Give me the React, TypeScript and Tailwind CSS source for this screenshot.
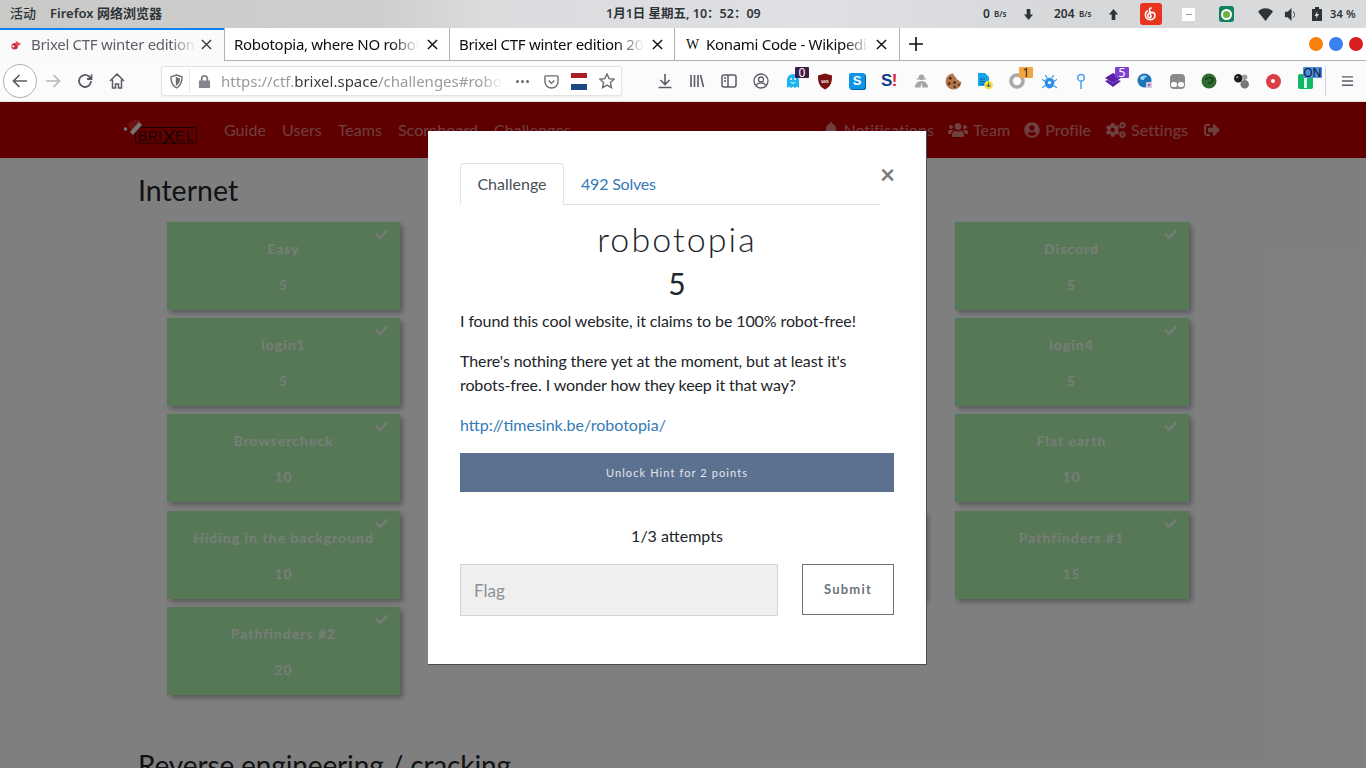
import { FaBell, FaCheck, FaCogs, FaSignOutAlt, FaUserCircle, FaUsers } from "react-icons/fa";
import { ReactNode } from "react";

const UI_FONT = "font-['Noto_Sans','Noto_Sans_CJK_SC',sans-serif]";
const PAGE_FONT = "font-['Lato',sans-serif]";

function TopBar() {
  return (
    <div className={`flex h-[28px] items-center bg-[linear-gradient(90deg,#c9c9c8_0%,#cfcfce_28%,#dcdcdf_36%,#dfe0e3_60%,#d6d7d9_80%,#dadbdd_100%)] text-[#2e3436] ${UI_FONT}`}>
      <span className="ml-[10px] w-[40px] text-[13px] font-medium">活动</span>
      <span className="w-[556px] text-[13px] font-semibold">Firefox 网络浏览器</span>
      <span className="w-[377px] text-[12.500px] font-semibold">1月1日 星期五, 10：52：09</span>
      <span className="w-[11px] text-[12px] font-semibold">0</span>
      <span className="w-[29px] text-[8px] font-semibold">B/s</span>
      <svg viewBox="0 0 12 14" className="mr-[20px] h-[13px] w-[11px] fill-[#2e3436]"><path d="M4 1h4v6h3l-5 6-5-6h3z" /></svg>
      <span className="w-[25px] text-[12px] font-semibold">204</span>
      <span className="w-[29px] text-[8px] font-semibold">B/s</span>
      <svg viewBox="0 0 12 14" className="mr-[21px] h-[13px] w-[11px] fill-[#2e3436]"><path d="M4 13h4V7h3L6 1 1 7h3z" /></svg>
      <div className="mr-[20px] flex h-[22px] w-[22px] items-center justify-center rounded-[3px] bg-[#e8331f]">
        <svg viewBox="0 0 20 20" className="h-[16px] w-[16px] fill-none stroke-white stroke-[2]"><path d="M11 3c-1-1-3 0-3 2l2 8c0 2-4 2-4-1 0-2 2-4 5-4s4 2 4 4c0 3-3 5-6 5-4 0-6-3-6-6 0-2 1-4 3-5" /></svg>
      </div>
      <div className="mr-[24px] flex h-[13px] w-[13px] items-center justify-center bg-white"><div className="h-[1px] w-[6px] bg-[#999]" /></div>
      <div className="mr-[24px] flex h-[16px] w-[15px] items-center justify-center rounded-[3px] bg-[#13805f]">
        <div className="flex h-[11px] w-[11px] items-center justify-center rounded-full bg-white"><div className="h-[7px] w-[7px] rounded-full bg-[#6cb33f]" /></div>
      </div>
      <svg viewBox="0 0 16 14" className="mr-[11px] h-[13px] w-[15px] fill-[#2e3436]"><path d="M0 4c4-5 12-5 16 0l-8 10z" /></svg>
      <svg viewBox="0 0 16 16" className="mr-[13px] h-[15px] w-[15px] fill-[#2e3436]"><path d="M1 5h3l4-4v14l-4-4H1zM10 4c2 2 2 6 0 8v-2c1-1 1-3 0-4z" /></svg>
      <svg viewBox="0 0 10 14" className="mr-[8px] h-[14px] w-[10px] fill-[#2e3436]"><path d="M3 0h4v2h3v12H0V2h3zM5.500 4 2.500 9h2l-.5 3 3-5H5z" /></svg>
      <span className="text-[11px] font-semibold tracking-[0.2px]">34 %</span>
    </div>
  );
}

function CloseX({ color }: { color: string }) {
  return (
    <svg viewBox="0 0 12 12" className={`h-[11px] w-[11px] shrink-0 fill-none stroke-[1.500] ${color}`}>
      <path d="M1 1l10 10M11 1 1 11" />
    </svg>
  );
}

function FadedTitle({ text, width }: { text: string; width: string }) {
  return (
    <span className={`overflow-hidden text-[15px] tracking-[-0.3px] whitespace-nowrap [mask-image:linear-gradient(90deg,#000_85%,transparent_100%)] ${width}`}>{text}</span>
  );
}

function TabStrip() {
  return (
    <div className={`flex h-[33px] bg-white ${UI_FONT}`}>
      <div className="relative flex h-full w-[225px] items-center border-r border-r-[#b1b1b3] bg-[#fafafb] text-[#5c5f66]">
        <div className="absolute top-0 right-0 left-0 h-[2px] bg-[#0a84ff]" />
        <div className="flex w-[31px] shrink-0 justify-center pl-[2px]">
          <svg viewBox="0 0 14 14" className="h-[13px] w-[13px]"><circle cx="5" cy="9" r="3.500" fill="#c9313f" /><path d="M6 3l6 3.500-5 3z" fill="#e4495a" /><circle cx="3.500" cy="9" r="1.200" fill="#eee" /></svg>
        </div>
        <FadedTitle text="Brixel CTF winter edition" width="w-[165px]" />
        <span className="ml-[5px]"><CloseX color="stroke-[#3a3a3c]" /></span>
      </div>
      <div className="flex h-full w-[225px] items-center border-r border-b border-r-[#b1b1b3] border-b-[#b1b1b3] pl-[9px] text-[#0c0c0d]">
        <FadedTitle text="Robotopia, where NO robot" width="w-[185px]" />
        <span className="ml-[8px]"><CloseX color="stroke-[#0c0c0d]" /></span>
      </div>
      <div className="flex h-full w-[225px] items-center border-r border-b border-r-[#b1b1b3] border-b-[#b1b1b3] pl-[9px] text-[#0c0c0d]">
        <FadedTitle text="Brixel CTF winter edition 20" width="w-[185px]" />
        <span className="ml-[8px]"><CloseX color="stroke-[#0c0c0d]" /></span>
      </div>
      <div className="flex h-full w-[225px] items-center border-r border-b border-r-[#b1b1b3] border-b-[#b1b1b3] pl-[11px] text-[#0c0c0d]">
        <span className="w-[20px] font-['Liberation_Serif',serif] text-[14px]">W</span>
        <FadedTitle text="Konami Code - Wikipedia" width="w-[163px]" />
        <span className="ml-[7px]"><CloseX color="stroke-[#0c0c0d]" /></span>
      </div>
      <div className="flex flex-1 items-center border-b border-b-[#b1b1b3] pr-[3px]">
        <svg viewBox="0 0 14 14" className="ml-[9px] h-[14px] w-[14px] fill-none stroke-[#0c0c0d] stroke-[1.600]"><path d="M7 0v14M0 7h14" /></svg>
        <div className="ml-auto flex gap-[6px]">
          <div className="h-[14px] w-[14px] rounded-full bg-[#fb7f0c]" />
          <div className="h-[14px] w-[14px] rounded-full bg-[#3b82f0]" />
          <div className="h-[14px] w-[14px] rounded-full bg-[#d81e1e]" />
        </div>
      </div>
    </div>
  );
}

function Badge({ text, color, dark }: { text: string; color: string; dark?: boolean }) {
  return (
    <span className={`absolute top-[6px] right-0 flex h-[11px] w-[14px] items-center justify-center rounded-[1px] text-[12px] leading-none ${color} ${dark ? "text-[#222]" : "text-white"}`}>{text}</span>
  );
}

function ExtIcon({ children }: { children: ReactNode }) {
  return <div className="relative flex h-full w-[32px] shrink-0 items-center justify-center">{children}</div>;
}

function ToolbarIcons() {
  return (
    <div className="ml-[27px] flex h-full items-center">
      <ExtIcon><svg viewBox="0 0 16 16" className="h-[16px] w-[16px] fill-none stroke-[#5b5b66] stroke-[1.600]"><path d="M8 1v10M3.500 7 8 11.500 12.500 7M1.500 14.500h13" /></svg></ExtIcon>
      <ExtIcon><svg viewBox="0 0 16 16" className="h-[16px] w-[16px] fill-none stroke-[#5b5b66] stroke-[1.600]"><path d="M2 2v12M5.500 2v12M9 2v12M11.500 2l3 12" /></svg></ExtIcon>
      <ExtIcon><svg viewBox="0 0 16 16" className="h-[16px] w-[16px] fill-none stroke-[#5b5b66] stroke-[1.500]"><rect x="1" y="2" width="14" height="12" rx="2" /><path d="M7 2v12M3 5h2M3 8h2" /></svg></ExtIcon>
      <ExtIcon><svg viewBox="0 0 16 16" className="h-[16px] w-[16px] fill-none stroke-[#5b5b66] stroke-[1.300]"><circle cx="8" cy="8" r="7" /><circle cx="8" cy="6.500" r="2.500" /><path d="M3.500 12.500c1-3.500 8-3.500 9 0" /></svg></ExtIcon>
      <ExtIcon>
        <svg viewBox="0 0 16 16" className="h-[18px] w-[16px]"><path d="M2 7a6 6 0 0 1 12 0v8l-2-1.500L10 15l-2-1.500L6 15l-2-1.500L2 15z" fill="#1ab2f0" /><circle cx="6" cy="6" r="1" fill="#fff" /><circle cx="10" cy="6" r="1" fill="#fff" /><path d="M5.500 9c1 1.500 4 1.500 5 0" stroke="#fff" fill="none" /></svg>
        <Badge text="0" color="bg-[#3d1b45]" />
      </ExtIcon>
      <ExtIcon>
        <svg viewBox="0 0 16 18" className="h-[19px] w-[16px]"><path d="M8 1l7 2c0 7-1 11-7 14C2 14 1 10 1 3z" fill="#7a0f10" /><text x="8" y="10.500" textAnchor="middle" fontSize="6" fontWeight="700" fill="#fff" fontFamily="Liberation Sans">uo</text></svg>
      </ExtIcon>
      <ExtIcon>
        <div className="flex h-[16px] w-[16px] items-center justify-center rounded-[2px] bg-[#0b94e8] font-['Liberation_Sans',sans-serif] text-[13px] font-bold text-white shadow-[1px_1px_0_#08609a]">S</div>
      </ExtIcon>
      <ExtIcon>
        <span className="font-['Liberation_Sans',sans-serif] text-[17px] font-bold tracking-[-0.5px] text-[#123a8c]">S<span className="text-[#e2202c]">!</span></span>
      </ExtIcon>
      <ExtIcon><svg viewBox="0 0 16 16" className="h-[16px] w-[15px] fill-[#a5a5a5]"><circle cx="8" cy="4" r="3" /><path d="M3 5h10v1.500H3zM1 15c0-4 3-7 7-7s7 3 7 7H9L8 9.500 7 15z" /></svg></ExtIcon>
      <ExtIcon>
        <svg viewBox="0 0 16 16" className="h-[17px] w-[17px]"><path d="M8 .5a7.500 7.500 0 1 0 7.500 7.500c-1 .5-2.500 0-2.500-1.500-1.500 0-3-1-2.500-2.500C9 4 8 2 8 .5z" fill="#b1764c" /><circle cx="5" cy="5" r="1.300" fill="#4c2a18" /><circle cx="4" cy="10" r="1.300" fill="#4c2a18" /><circle cx="9" cy="9" r="1.300" fill="#4c2a18" /><circle cx="9" cy="13" r="1.100" fill="#4c2a18" /><circle cx="13" cy="11" r=".9" fill="#4c2a18" /></svg>
      </ExtIcon>
      <ExtIcon>
        <svg viewBox="0 0 16 18" className="h-[18px] w-[16px]"><path d="M1 1h7l4 4v9H1z" fill="#13a4ea" /><path d="M3 7h5M3 9.500h5M3 12h4" stroke="#0a5f9a" /><circle cx="11.500" cy="13" r="4.300" fill="#f4dc3c" /><path d="M11.500 10.500V15M9.500 13l2 2 2-2" stroke="#33507a" fill="none" /></svg>
      </ExtIcon>
      <ExtIcon>
        <svg viewBox="0 0 16 16" className="h-[16px] w-[16px] fill-none stroke-[#a9a9a9] stroke-[3.600]"><circle cx="8" cy="8" r="6" /></svg>
        <Badge text="1" color="bg-[#f2a541]" dark />
      </ExtIcon>
      <ExtIcon>
        <svg viewBox="0 0 16 16" className="h-[17px] w-[17px]"><ellipse cx="8" cy="9.500" rx="4.500" ry="5" fill="#2a8ee8" /><path d="M4 2l2 3M12 2l-2 3M1 6l3 2M15 6l-3 2M1 14l3-2M15 14l-3-2" stroke="#2a8ee8" /><circle cx="8" cy="9" r="1.500" fill="#fff" /></svg>
      </ExtIcon>
      <ExtIcon>
        <svg viewBox="0 0 10 18" className="h-[17px] w-[10px] fill-none stroke-[#4aa3f0] stroke-[1.600]"><circle cx="5" cy="5" r="3.500" /><path d="M5 8.500V17" /></svg>
      </ExtIcon>
      <ExtIcon>
        <svg viewBox="0 0 18 16" className="h-[18px] w-[18px] fill-[#5b1fa8]"><path d="M9 0l8 5-8 5-8-5z" /><path d="M1 8l3-1 5 3 5-3 3 1-8 6z" /></svg>
        <Badge text="5" color="bg-[#7e3fd0]" />
      </ExtIcon>
      <ExtIcon>
        <svg viewBox="0 0 16 16" className="h-[16px] w-[16px]"><circle cx="7.500" cy="7.500" r="7" fill="#1d74b8" /><path d="M3 5c2-3 6-3 7-1-2 0-3 1-3 3-2 0-3 0-4-2z" fill="#9ed3ef" /><rect x="9" y="9" width="6" height="6" rx="1" fill="#d6c8e4" /><circle cx="12" cy="12" r="1.200" fill="#8a5ba8" /></svg>
      </ExtIcon>
      <ExtIcon>
        <div className="relative h-[15px] w-[15px] rounded-[4px] bg-[#8b8b8b]">
          <div className="absolute bottom-[2px] left-[1px] h-[5px] w-[6px] rounded-full bg-white" />
          <div className="absolute right-[1px] bottom-[2px] h-[5px] w-[6px] rounded-full bg-white" />
        </div>
      </ExtIcon>
      <ExtIcon>
        <svg viewBox="0 0 16 16" className="h-[16px] w-[16px]"><circle cx="8" cy="8" r="7.500" fill="#2f6b2f" /><path d="M4 7c2-3 6-3 8-1 0 3-3 5-5 4" stroke="#173d17" strokeWidth="1.500" fill="none" /></svg>
      </ExtIcon>
      <ExtIcon>
        <svg viewBox="0 0 16 16" className="h-[17px] w-[17px]"><circle cx="5" cy="5" r="4" fill="#1b1b1b" /><circle cx="11" cy="4" r="2.500" fill="#9a9a9a" /><circle cx="11" cy="10.500" r="4" fill="#777" /><circle cx="4" cy="4" r="1" fill="#aaa" /></svg>
      </ExtIcon>
      <ExtIcon>
        <div className="flex h-[15px] w-[15px] items-center justify-center rounded-full bg-[#db3e43]"><div className="h-[4px] w-[4px] rounded-full bg-white" /></div>
      </ExtIcon>
      <ExtIcon>
        <div className="flex h-[15px] w-[15px] items-center justify-center rounded-[2px] bg-[#10b765]"><div className="h-[13px] w-[3px] bg-[#d9f5e6]" /></div>
        <span className="absolute top-[6px] -right-[1px] flex h-[11px] w-[19px] items-center justify-center rounded-[1px] bg-[#4a8fe8] text-[12px] leading-none text-[#111]">ON</span>
      </ExtIcon>
      <div className="ml-[4px] h-[30px] w-[1px] bg-[#d7d7db]" />
      <svg viewBox="0 0 14 12" className="ml-[15px] h-[12px] w-[13px] fill-none stroke-[#5b5b66] stroke-[1.500]"><path d="M1 1.500h12M1 6h12M1 10.500h12" /></svg>
    </div>
  );
}

function Toolbar() {
  return (
    <div className={`flex h-[41px] items-center border-b border-b-[#e1e1e3] bg-[#fbfbfb] ${UI_FONT}`}>
      <div className="ml-[3px] flex h-[34px] w-[34px] items-center justify-center rounded-full border border-[#b1b1b3] bg-white">
        <svg viewBox="0 0 16 16" className="h-[16px] w-[16px] fill-none stroke-[#5b5b66] stroke-[1.700]"><path d="M15 8H1.500M7.500 2 1.500 8l6 6" /></svg>
      </div>
      <svg viewBox="0 0 16 16" className="ml-[8px] h-[16px] w-[16px] fill-none stroke-[#b8b8bc] stroke-[1.700]"><path d="M1 8h13.500M8.500 2l6 6-6 6" /></svg>
      <svg viewBox="0 0 16 16" className="ml-[16px] h-[16px] w-[16px] fill-none stroke-[#5b5b66] stroke-[1.800]"><path d="M14 8a6 6 0 1 1-2-4.500l2 2" /><path d="M14.500 1.500v4.500H10" /></svg>
      <svg viewBox="0 0 16 16" className="ml-[16px] h-[16px] w-[16px] fill-none stroke-[#5b5b66] stroke-[1.500]"><path d="M1 8l7-7 7 7M3.500 6.500V15h3v-4h3v4h3V6.500" /></svg>
      <div className="ml-[36px] flex h-[30px] w-[461px] items-center rounded-[3px] border border-[#e3e3e5] bg-white shadow-[0_1px_2px_rgba(0,0,0,0.06)]">
        <svg viewBox="0 0 14 16" className="ml-[8px] h-[15px] w-[13px] fill-none stroke-[#6f6f75] stroke-[1.500]"><path d="M7 1l6 2c0 6-2 10-6 12C3 13 1 9 1 3z" /><path d="M7 4l3 1c0 3-1 5-3 6.500z" fill="#6f6f75" /></svg>
        <div className="ml-[6px] h-[24px] w-[1px] bg-[#e6e6e8]" />
        <svg viewBox="0 0 14 16" className="ml-[8px] h-[15px] w-[13px] fill-[#85858b]"><path d="M3 7V5a4 4 0 0 1 8 0v2h2v8H1V7zm2 0h4V5a2 2 0 0 0-4 0z" /></svg>
        <span className="ml-[10px] w-[282px] overflow-hidden text-[15px] whitespace-nowrap text-[#9a9a9f] [mask-image:linear-gradient(90deg,#000_92%,transparent_100%)]">
          https://ctf.<span className="text-[#3a3a40]">brixel.space</span>/challenges#robo
        </span>
        <span className="ml-[13px] flex gap-[2px]">
          <span className="h-[3px] w-[3px] rounded-full bg-[#6b6b70]" />
          <span className="h-[3px] w-[3px] rounded-full bg-[#6b6b70]" />
          <span className="h-[3px] w-[3px] rounded-full bg-[#6b6b70]" />
        </span>
        <svg viewBox="0 0 16 16" className="ml-[15px] h-[15px] w-[15px] fill-none stroke-[#6b6b70] stroke-[1.500]"><path d="M2 2h12a1 1 0 0 1 1 1v5a7 7 0 0 1-14 0V3a1 1 0 0 1 1-1z" /><path d="M5 7l3 3 3-3" /></svg>
        <div className="ml-[12px] flex w-[16px] flex-col">
          <div className="h-[5px] bg-[#ad1d28]" />
          <div className="h-[6px] bg-white" />
          <div className="h-[6px] bg-[#1e4785]" />
        </div>
        <svg viewBox="0 0 16 16" className="ml-[12px] h-[16px] w-[16px] fill-none stroke-[#6b6b70] stroke-[1.400]"><path d="M8 1l2.100 4.600 5 .6-3.700 3.400 1 5L8 12.100 3.600 14.600l1-5L.9 6.200l5-.6z" /></svg>
      </div>
      <ToolbarIcons />
    </div>
  );
}

function Logo() {
  return (
    <svg viewBox="0 0 74 28" className="mt-[6px] h-[28px] w-[74px]">
      <rect x="12.500" y="8.500" width="61" height="15.500" rx="2" fill="none" stroke="#3a0000" strokeWidth="1" />
      <text x="15" y="22" fontSize="14" fontFamily="Liberation Sans" fill="#3a0000" textLength="24">BRI</text>
      <text x="39" y="25" fontSize="21" fontFamily="Liberation Sans" fill="#3a0000" textLength="13">X</text>
      <text x="52" y="22" fontSize="14" fontFamily="Liberation Sans" fill="#3a0000" textLength="19">EL</text>
      <path d="M5 7c0-5 6-7 12-6l-1 7-6 6z" fill="#e02424" />
      <path d="M7 13 16 3l3 3-9 10z" fill="#e8e8e8" />
      <circle cx="2.500" cy="10" r="1.800" fill="#e8e8e8" />
    </svg>
  );
}

function NavLink({ children, icon, className = "" }: { children: string; icon?: ReactNode; className?: string }) {
  return (
    <span className={`flex items-center gap-[5px] px-[8px] text-[16px] tracking-[0.05px] whitespace-nowrap text-white/50 ${className}`}>
      {icon}
      {children}
    </span>
  );
}

function Navbar() {
  return (
    <div className="flex h-[56px] items-center bg-[#bf0000] pr-[138px] pl-[123px]">
      <Logo />
      <div className="ml-[19px] flex">
        <NavLink>Guide</NavLink>
        <NavLink>Users</NavLink>
        <NavLink>Teams</NavLink>
        <NavLink>Scoreboard</NavLink>
        <NavLink>Challenges</NavLink>
      </div>
      <div className="ml-auto flex">
        <NavLink icon={<FaBell className="h-[16px] w-[14px]" />}>Notifications</NavLink>
        <NavLink className="-ml-[2px]" icon={<FaUsers className="h-[16px] w-[20px]" />}>Team</NavLink>
        <NavLink className="-ml-[2px]" icon={<FaUserCircle className="h-[16px] w-[16px]" />}>Profile</NavLink>
        <NavLink className="-ml-[1px]" icon={<FaCogs className="h-[16px] w-[20px]" />}>Settings</NavLink>
        <NavLink icon={<FaSignOutAlt className="h-[16px] w-[16px]" />}>{""}</NavLink>
      </div>
    </div>
  );
}

function ChallengeCard({ name, value }: { name: string; value: number }) {
  return (
    <div className="relative flex h-[88px] flex-col items-center bg-[#aef0ae] text-[14px] font-bold tracking-[1px] text-white/80 shadow-[3px_3px_5px_rgba(0,0,0,0.3)]">
      <FaCheck className="absolute top-[6px] right-[11px] h-[13px] w-[15px] text-white/70" />
      <span className="mt-[16px]">{name}</span>
      <span className="mt-[15px]">{value}</span>
    </div>
  );
}

function Page() {
  return (
    <div className={`relative h-[666px] overflow-hidden bg-white ${PAGE_FONT}`}>
      <Navbar />
      <div className="pl-[138px]">
        <h3 className="mt-[14px] text-[28.500px] leading-[36px] text-[#212529]">Internet</h3>
        <div className="mt-[13.600px] ml-[29px] grid w-[1022px] grid-cols-[233px_233px_233px_234px] gap-x-[29.500px] gap-y-[8.420px]">
          <ChallengeCard name="Easy" value={5} />
          <div />
          <div />
          <ChallengeCard name="Discord" value={5} />
          <ChallengeCard name="login1" value={5} />
          <div />
          <div />
          <ChallengeCard name="login4" value={5} />
          <ChallengeCard name="Browsercheck" value={10} />
          <div />
          <div />
          <ChallengeCard name="Flat earth" value={10} />
          <ChallengeCard name="Hiding in the background" value={10} />
          <div />
          <div className="h-[88px] bg-[#aef0ae] shadow-[3px_3px_5px_rgba(0,0,0,0.3)]" />
          <ChallengeCard name="Pathfinders #1" value={15} />
          <ChallengeCard name="Pathfinders #2" value={20} />
        </div>
        <h3 className="mt-[52px] text-[28px] leading-[36px] tracking-[-0.13px] whitespace-nowrap text-[#212529]">Reverse engineering / cracking</h3>
      </div>
      <div className="absolute inset-0 bg-black/50" />
    </div>
  );
}

function ChallengeModal() {
  return (
    <div className={`absolute top-[131px] left-[428px] h-[534px] w-[499px] border-r border-b border-[#4d4d4d] bg-white pt-[32px] pr-[32px] pl-[32px] text-[16px] text-[#212529] ${PAGE_FONT}`}>
      <span className="absolute top-[25px] right-[31px] text-[26px] leading-[36px] font-bold text-[#7a7a7a]">×</span>
      <div className="mr-[14px] flex h-[42px] border-b border-b-[#dee2e6]">
        <div className="h-[42px] w-[104px] rounded-t-[4px] border border-[#dee2e6] border-b-white bg-white pt-[8px] text-center text-[#495057]">Challenge</div>
        <div className="pt-[9px] pl-[17px] tracking-[-0.2px] text-[#337ab7]">492 Solves</div>
      </div>
      <h3 className="mt-[12px] text-center text-[34px] leading-[43px] font-light tracking-[2.100px]">robotopia</h3>
      <div className="text-center text-[30px] leading-[47px]">5</div>
      <p className="mt-[2px] leading-[24px] tracking-[-0.1px]">I found this cool website, it claims to be 100% robot-free!</p>
      <p className="mt-[16px] leading-[24px] tracking-[-0.1px]">There's nothing there yet at the moment, but at least it's robots-free. I wonder how they keep it that way?</p>
      <p className="mt-[16px] leading-[24px] text-[#337ab7]">http://timesink.be/robotopia/</p>
      <div className="mt-[16px] flex h-[39px] items-center justify-center bg-[#5c7190] pt-[2px] text-[11px] tracking-[1.100px] text-[#e2e7ee]">Unlock Hint for 2 points</div>
      <div className="mt-[32px] text-center leading-[24px]">1/3 attempts</div>
      <div className="mt-[16px] flex items-start gap-[24px]">
        <div className="flex h-[52px] w-[318px] items-center border border-[#ced4da] bg-[#efefef] pt-[2px] pl-[13px] text-[17px] text-[#8a9096]">Flag</div>
        <div className="flex h-[51px] w-[92px] items-center justify-center border border-[#6c757d] pt-[1px] text-[13px] font-bold tracking-[1.200px] text-[#6c757d]">Submit</div>
      </div>
    </div>
  );
}

export default function App() {
  return (
    <div className="relative h-[768px] w-[1366px] overflow-hidden bg-[#808080]">
      <TopBar />
      <TabStrip />
      <Toolbar />
      <Page />
      <ChallengeModal />
    </div>
  );
}
